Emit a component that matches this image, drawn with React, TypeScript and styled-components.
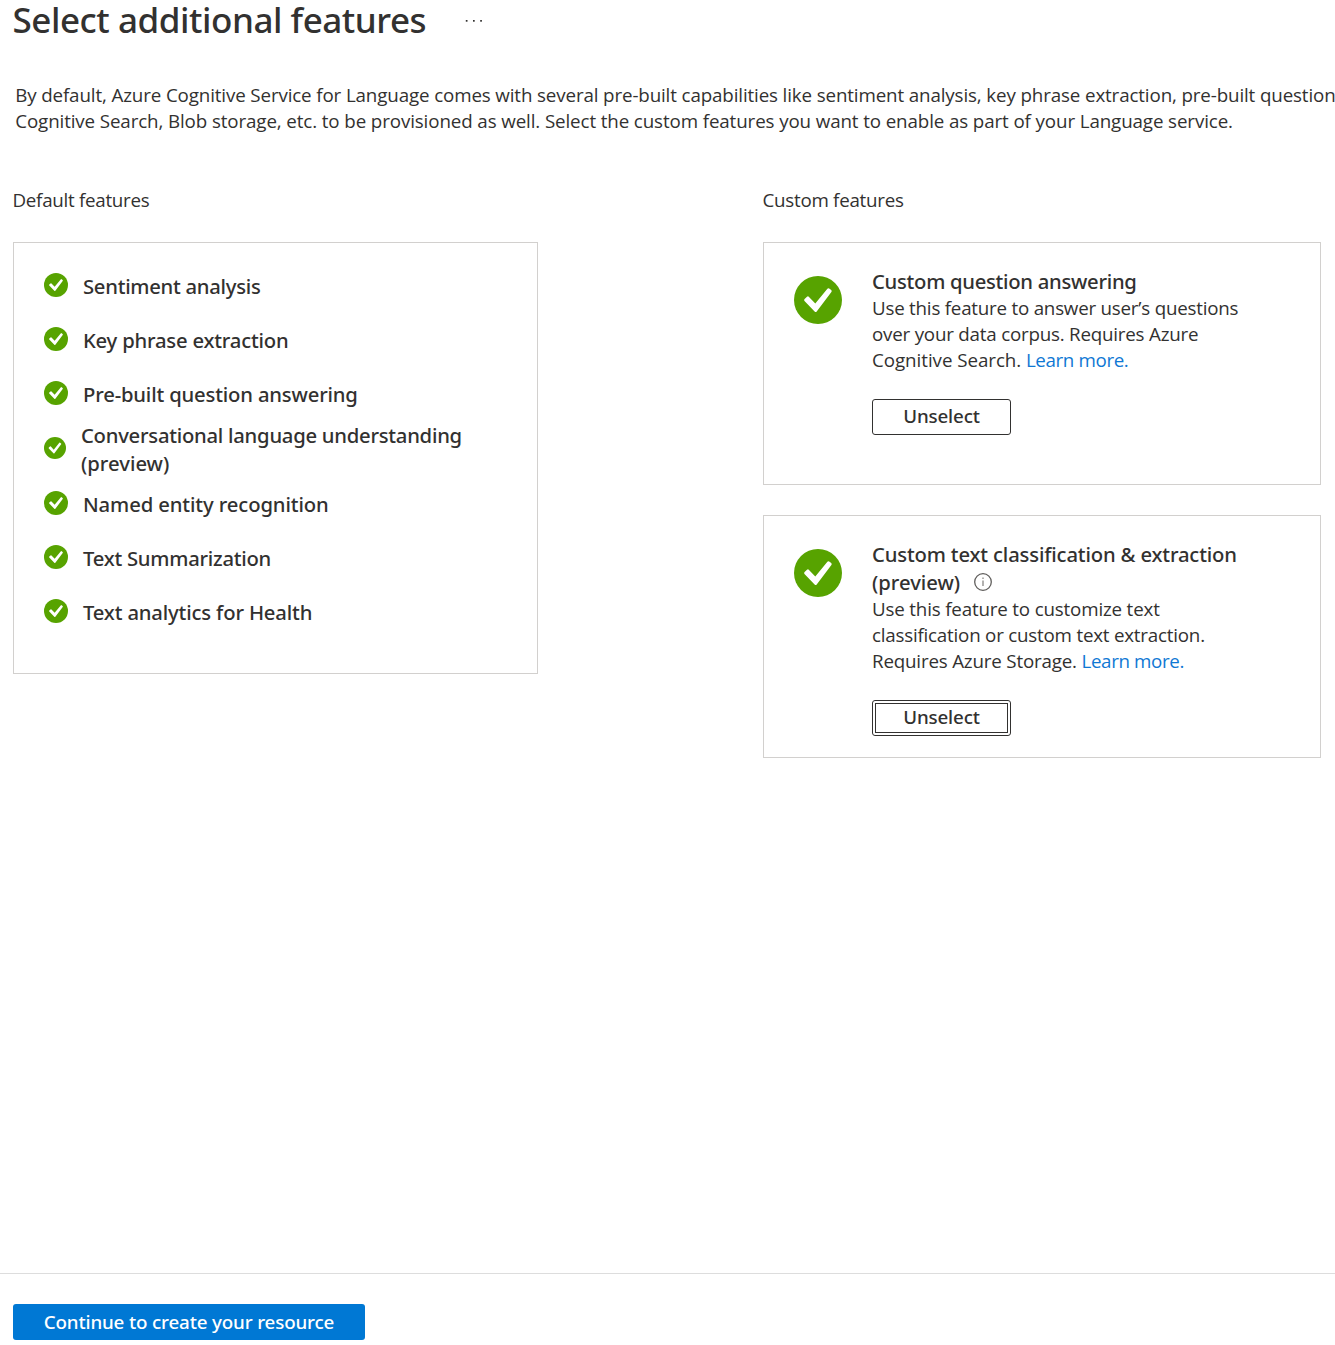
import React from "react";
import styled, { createGlobalStyle } from "styled-components";

const regular = `"Segoe UI", "Open Sans", "Noto Sans", sans-serif`;
const semibold = `"Segoe UI Semibold", "Noto Sans", "Open Sans", sans-serif`;

const GlobalStyle = createGlobalStyle`
  *, *::before, *::after { box-sizing: border-box; }
  body {
    margin: 0;
    background: #ffffff;
    color: #323130;
    font-family: ${regular};
    font-size: 18.75px;
    line-height: 26px;
    overflow: hidden;
  }
  p, h1, h2, h3, ul { margin: 0; padding: 0; }
`;

const Page = styled.div`
  display: flex;
  flex-direction: column;
  height: 1345px;
  overflow: hidden;
`;

const Header = styled.header`
  display: flex;
  align-items: flex-start;
  gap: 39px;
  height: 38px;
  padding-left: 12.5px;
`;

const Title = styled.h1`
  font-family: ${semibold};
  font-weight: 500;
  font-size: 35px;
  line-height: 40px;
  letter-spacing: -0.45px;
  white-space: nowrap;
`;

const MoreButton = styled.button`
  display: flex;
  padding: 0;
  margin-top: 18px;
  border: 0;
  background: none;
  color: #323130;
`;

const Line = styled.span<{ $track?: number }>`
  display: block;
  white-space: nowrap;
  letter-spacing: ${({ $track = 0 }) => $track}px;
`;

const Intro = styled.p`
  margin-top: 44px;
  padding-left: 15.2px;
`;

const Columns = styled.main`
  display: grid;
  grid-template-columns: 525px 558px;
  column-gap: 225px;
  align-items: start;
  margin-top: 53px;
  padding-left: 13px;
`;

const Column = styled.section`
  display: flex;
  flex-direction: column;
`;

const ColumnLabel = styled.h2`
  margin: 0 0 29px -0.5px;
  font-size: inherit;
  font-weight: 400;
`;

const FeatureList = styled.ul`
  height: 432px;
  padding: 16px 30px;
  border: 1px solid #d2d0ce;
  list-style: none;
`;

const FeatureItem = styled.li<{ $tall?: boolean }>`
  display: flex;
  align-items: center;
  gap: 15px;
  height: ${({ $tall }) => ($tall ? 56 : 54)}px;

  svg { margin-bottom: 2px; flex: none; }
`;

const Strong = styled.div`
  font-family: ${semibold};
  font-weight: 500;
  font-size: 20.25px;
  line-height: 28px;
`;

const Cards = styled.div`
  display: flex;
  flex-direction: column;
  gap: 30px;
`;

const Card = styled.article`
  display: flex;
  gap: 30px;
  height: 243px;
  padding: 24px 30px 0;
  border: 1px solid #d2d0ce;

  > svg { margin-top: 9px; flex: none; }
`;

const CardBody = styled.div`
  display: flex;
  flex-direction: column;
  align-items: flex-start;
`;

const TitleRow = styled.span`
  display: flex;
  align-items: center;
  gap: 14px;
`;

const Link = styled.a<{ $track?: number }>`
  color: #0f78d4;
  letter-spacing: ${({ $track = -0.37 }) => $track}px;
  text-decoration: none;
`;

const Button = styled.button<{ $focused?: boolean }>`
  width: 139px;
  height: 36px;
  margin-top: 26px;
  padding: 0 0 2px;
  border: 1px solid #323130;
  border-radius: 3px;
  outline: ${({ $focused }) => ($focused ? "1px solid #323130" : "none")};
  outline-offset: -4px;
  background: #ffffff;
  color: #323130;
  font-family: ${semibold};
  font-weight: 500;
  font-size: 18.75px;
  line-height: 26px;
  letter-spacing: -0.15px;
`;

const Footer = styled.footer`
  height: 72px;
  margin-top: auto;
  padding: 30px 13px 0;
  border-top: 1px solid #dddddd;
`;

const PrimaryButton = styled(Button)`
  width: 352px;
  margin: 0;
  padding: 0;
  border: 0;
  background: #0078d4;
  color: #ffffff;
`;

function CheckBadge({ size = 24 }: { size?: number }) {
  return (
    <svg width={size} height={size} viewBox="0 0 48 48">
      <circle cx="24" cy="24" r="24" fill="#57a300" />
      <path
        d="M10.6 23 13 20.8Q14 19.9 15 20.9L21.3 27.6 33.4 12.8Q34.2 11.8 35.2 12.6L37.2 14.1Q38.2 15 37.4 16L22.7 35.4Q21.7 36.6 20.6 35.4L10.5 25Q9.6 24 10.6 23Z"
        fill="#ffffff"
      />
    </svg>
  );
}

function InfoIcon() {
  return (
    <svg width="18" height="18" viewBox="0 0 18 18">
      <circle cx="9" cy="9" r="8.3" fill="none" stroke="#605e5c" strokeWidth="1.3" />
      <path d="M9 7.5V13M9 4.5V6" stroke="#8a8886" strokeWidth="1.3" />
    </svg>
  );
}

type Text = [string, number];

const features: Text[][] = [
  [["Sentiment analysis", -0.27]],
  [["Key phrase extraction", -0.2]],
  [["Pre-built question answering", -0.17]],
  [["Conversational language understanding", -0.25], ["(preview)", 0]],
  [["Named entity recognition", -0.11]],
  [["Text Summarization", -0.25]],
  [["Text analytics for Health", -0.16]],
];

export default function App() {
  return (
    <Page>
      <GlobalStyle />
      <Header>
        <Title>Select additional features</Title>
        <MoreButton aria-label="More">
          <svg width="18" height="5" viewBox="0 0 18 5" fill="currentColor">
            <rect x="0.8" y="2" width="1.7" height="1.7" />
            <rect x="8" y="2" width="1.7" height="1.7" />
            <rect x="15.2" y="2" width="1.7" height="1.7" />
          </svg>
        </MoreButton>
      </Header>
      <Intro>
        <Line $track={-0.125}>
          By default, Azure Cognitive Service for Language comes with several pre-built capabilities like sentiment
          analysis, key phrase extraction, pre-built question
        </Line>
        <Line $track={-0.11}>
          Cognitive Search, Blob storage, etc. to be provisioned as well. Select the custom features you want to enable
          as part of your Language service.
        </Line>
      </Intro>
      <Columns>
        <Column>
          <ColumnLabel>
            <Line $track={-0.27}>Default features</Line>
          </ColumnLabel>
          <FeatureList>
            {features.map((lines) => (
              <FeatureItem key={lines[0][0]} $tall={lines.length > 1}>
                <CheckBadge size={lines.length > 1 ? 22 : 24} />
                <Strong>
                  {lines.map(([text, track]) => (
                    <Line key={text} $track={track}>{text}</Line>
                  ))}
                </Strong>
              </FeatureItem>
            ))}
          </FeatureList>
        </Column>
        <Column>
          <ColumnLabel>
            <Line $track={-0.26}>Custom features</Line>
          </ColumnLabel>
          <Cards>
            <Card>
              <CheckBadge size={48} />
              <CardBody>
                <Strong as="h3">
                  <Line $track={-0.28}>Custom question answering</Line>
                </Strong>
                <p>
                  <Line $track={-0.22}>Use this feature to answer user’s questions</Line>
                  <Line $track={-0.21}>over your data corpus. Requires Azure</Line>
                  <Line $track={-0.05}>Cognitive Search. <Link>Learn more.</Link></Line>
                </p>
                <Button>Unselect</Button>
              </CardBody>
            </Card>
            <Card>
              <CheckBadge size={48} />
              <CardBody>
                <Strong as="h3">
                  <Line $track={-0.16}>Custom text classification &amp; extraction</Line>
                  <TitleRow>
                    <Line $track={-0.03}>(preview)</Line>
                    <InfoIcon />
                  </TitleRow>
                </Strong>
                <p>
                  <Line $track={-0.17}>Use this feature to customize text</Line>
                  <Line $track={-0.21}>classification or custom text extraction.</Line>
                  <Line $track={-0.18}>Requires Azure Storage. <Link>Learn more.</Link></Line>
                </p>
                <Button $focused>Unselect</Button>
              </CardBody>
            </Card>
          </Cards>
        </Column>
      </Columns>
      <Footer>
        <PrimaryButton>Continue to create your resource</PrimaryButton>
      </Footer>
    </Page>
  );
}
